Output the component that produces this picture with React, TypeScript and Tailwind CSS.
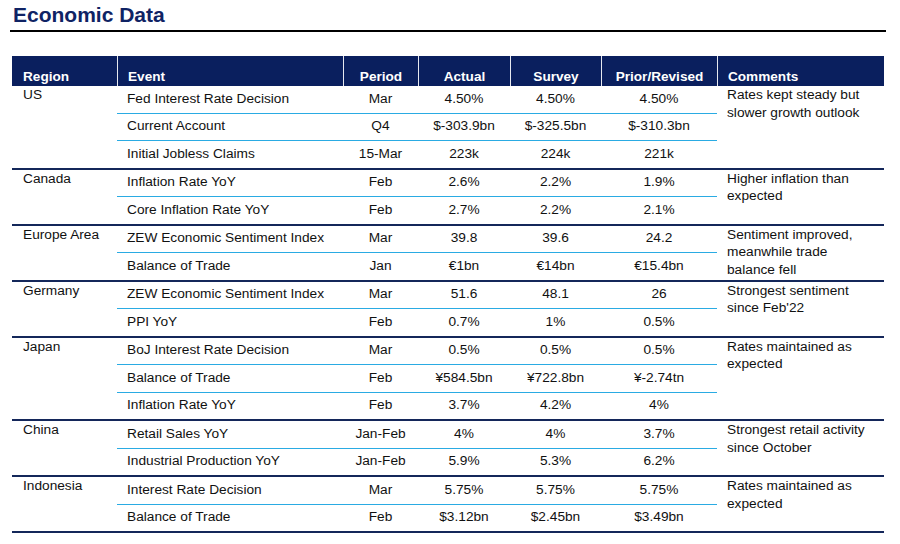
import React from "react";

type Row = [string, string, string, string, string];
type Group = { region: string; comment: string[]; rows: Row[] };

const groups: Group[] = [
  {
    region: "US",
    comment: ["Rates kept steady but", "slower growth outlook"],
    rows: [
      ["Fed Interest Rate Decision", "Mar", "4.50%", "4.50%", "4.50%"],
      ["Current Account", "Q4", "$-303.9bn", "$-325.5bn", "$-310.3bn"],
      ["Initial Jobless Claims", "15-Mar", "223k", "224k", "221k"],
    ],
  },
  {
    region: "Canada",
    comment: ["Higher inflation than", "expected"],
    rows: [
      ["Inflation Rate YoY", "Feb", "2.6%", "2.2%", "1.9%"],
      ["Core Inflation Rate YoY", "Feb", "2.7%", "2.2%", "2.1%"],
    ],
  },
  {
    region: "Europe Area",
    comment: ["Sentiment improved,", "meanwhile trade", "balance fell"],
    rows: [
      ["ZEW Economic Sentiment Index", "Mar", "39.8", "39.6", "24.2"],
      ["Balance of Trade", "Jan", "€1bn", "€14bn", "€15.4bn"],
    ],
  },
  {
    region: "Germany",
    comment: ["Strongest sentiment", "since Feb'22"],
    rows: [
      ["ZEW Economic Sentiment Index", "Mar", "51.6", "48.1", "26"],
      ["PPI YoY", "Feb", "0.7%", "1%", "0.5%"],
    ],
  },
  {
    region: "Japan",
    comment: ["Rates maintained as", "expected"],
    rows: [
      ["BoJ Interest Rate Decision", "Mar", "0.5%", "0.5%", "0.5%"],
      ["Balance of Trade", "Feb", "¥584.5bn", "¥722.8bn", "¥-2.74tn"],
      ["Inflation Rate YoY", "Feb", "3.7%", "4.2%", "4%"],
    ],
  },
  {
    region: "China",
    comment: ["Strongest retail activity", "since October"],
    rows: [
      ["Retail Sales YoY", "Jan-Feb", "4%", "4%", "3.7%"],
      ["Industrial Production YoY", "Jan-Feb", "5.9%", "5.3%", "6.2%"],
    ],
  },
  {
    region: "Indonesia",
    comment: ["Rates maintained as", "expected"],
    rows: [
      ["Interest Rate Decision", "Mar", "5.75%", "5.75%", "5.75%"],
      ["Balance of Trade", "Feb", "$3.12bn", "$2.45bn", "$3.49bn"],
    ],
  },
];

export default function App() {
  return (
    <div className="w-[900px] h-[544px] bg-white overflow-hidden font-['Liberation_Sans',Arial,sans-serif] text-[#111]">
      <div className="ml-[10px] w-[876px] h-[32px] border-b-2 border-black pt-[3px] pl-[3px]">
        <h1 className="text-[21px] font-bold text-[#0f2364] leading-[24px]">Economic Data</h1>
      </div>

      <div className="ml-[12px] mt-[24px] w-[872px]">
        {/* Header */}
        <div className="flex h-[30px] bg-[#0a1f5e] text-white text-[13.6px] font-bold leading-[15px]">
          <div className="w-[105px] flex items-end pl-[11px] pb-[2px]">Region</div>
          <div className="w-[226px] flex items-end pl-[10px] pb-[2px] border-l-[1.5px] border-[#e6e8ef]">Event</div>
          <div className="w-[75px] flex items-end justify-center pb-[2px] border-l-[1.5px] border-[#e6e8ef]">Period</div>
          <div className="w-[92px] flex items-end justify-center pb-[2px] border-l-[1.5px] border-[#e6e8ef]">Actual</div>
          <div className="w-[91px] flex items-end justify-center pb-[2px] border-l-[1.5px] border-[#e6e8ef]">Survey</div>
          <div className="w-[116px] flex items-end justify-center pb-[2px] border-l-[1.5px] border-[#e6e8ef]">Prior/Revised</div>
          <div className="flex-1 flex items-end pl-[10px] pb-[2px] border-l-[1.5px] border-[#e6e8ef]">Comments</div>
        </div>

        {groups.map((g) => (
          <div key={g.region} className="flex border-b-2 border-[#14275a] text-[13.7px]">
            <div className="w-[105px] pl-[11px] leading-[17.5px]">{g.region}</div>
            <div className="w-[600px] flex flex-col">
              {g.rows.map((r, i) => (
                <div
                  key={i}
                  className={
                    i < g.rows.length - 1
                      ? "flex items-center h-[26.5px] box-content border-b border-[#2aabe3]"
                      : "flex items-center h-[26.5px]"
                  }
                >
                  <div className="w-[226px] pl-[10px] whitespace-nowrap">{r[0]}</div>
                  <div className="w-[75px] text-center">{r[1]}</div>
                  <div className="w-[92px] text-center">{r[2]}</div>
                  <div className="w-[91px] text-center">{r[3]}</div>
                  <div className="w-[116px] text-center">{r[4]}</div>
                </div>
              ))}
            </div>
            <div className="flex-1 pl-[10px] leading-[17.5px] whitespace-nowrap">
              {g.comment.map((c, i) => (
                <div key={i}>{c}</div>
              ))}
            </div>
          </div>
        ))}
      </div>
    </div>
  );
}
